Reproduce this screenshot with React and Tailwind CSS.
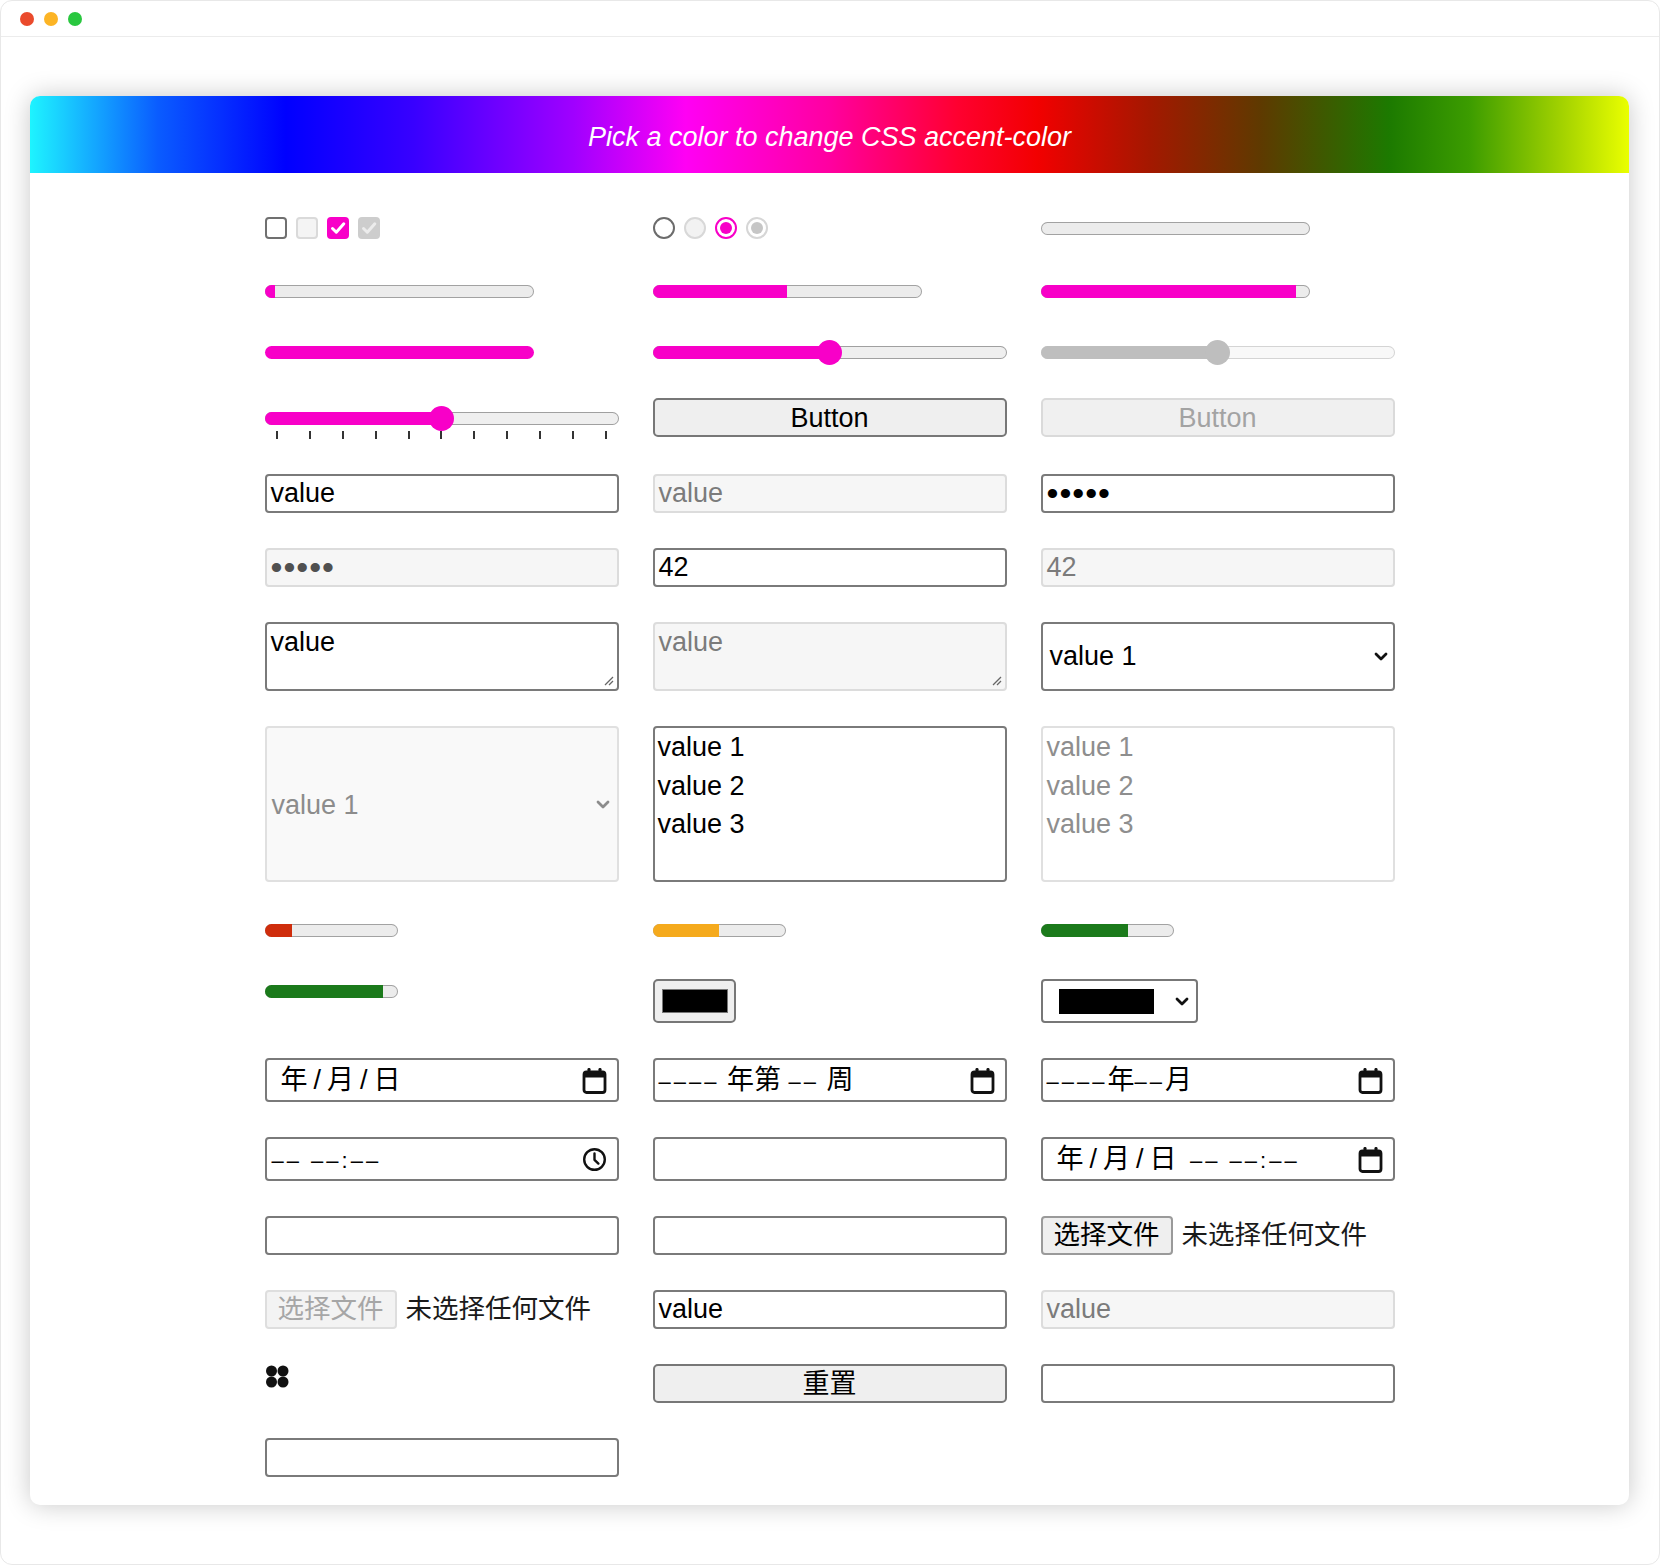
import React from "react";

const FONT = "font-['Liberation_Sans','Noto_Sans_CJK_SC',sans-serif]";

function Check({ kind }) {
  if (kind === "off")
    return <div className="w-[22px] h-[22px] rounded-[4px] border-2 border-[#707070] bg-white" />;
  if (kind === "offDis")
    return <div className="w-[22px] h-[22px] rounded-[4px] border-2 border-[#dadada] bg-[#f4f4f4]" />;
  const on = kind === "on";
  return (
    <div className={`w-[22px] h-[22px] rounded-[4px] flex items-center justify-center ${on ? "bg-[#f800c8]" : "bg-[#cdcdcd]"}`}>
      <svg width="22" height="22" viewBox="0 0 22 22">
        <path d="M5.5 11.5 L9.3 15.2 L16.8 6.8" fill="none" stroke={on ? "#ffffff" : "#ececec"} strokeWidth="3" strokeLinecap="round" strokeLinejoin="round" />
      </svg>
    </div>
  );
}

function Radio({ kind }) {
  if (kind === "off")
    return <div className="w-[22px] h-[22px] rounded-full border-2 border-[#6c6c6c] bg-white" />;
  if (kind === "offDis")
    return <div className="w-[22px] h-[22px] rounded-full border-2 border-[#d8d8d8] bg-[#f2f2f2]" />;
  const on = kind === "on";
  return (
    <div className={`w-[22px] h-[22px] rounded-full border-2 bg-white flex items-center justify-center ${on ? "border-[#f800c8]" : "border-[#d6d6d6]"}`}>
      <div className={`w-[12px] h-[12px] rounded-full ${on ? "bg-[#f800c8]" : "bg-[#c6c6c6]"}`} />
    </div>
  );
}

function Bar({ pct, color, w }) {
  return (
    <div className={`${w} h-[13px] rounded-full overflow-hidden bg-[#ececec] shadow-[inset_0_0_0_1px_#a2a2a2]`}>
      <div className="h-full" style={{ width: `${pct}%`, backgroundColor: color }} />
    </div>
  );
}

function Range({ pct, disabled }) {
  const f = pct / 100;
  return (
    <div className="relative w-full h-[25px] flex items-center">
      <div className={`w-full h-[13px] rounded-full overflow-hidden ${disabled ? "bg-[#f8f8f8] shadow-[inset_0_0_0_1px_#d4d4d4]" : "bg-[#efefef] shadow-[inset_0_0_0_1px_#a0a0a0]"}`}>
        <div className={`h-full ${disabled ? "bg-[#bebebe]" : "bg-[#f800c8]"}`} style={{ width: `calc(12.5px + (100% - 25px) * ${f})` }} />
      </div>
      <div className={`absolute top-0 w-[25px] h-[25px] rounded-full ${disabled ? "bg-[#bebebe]" : "bg-[#f800c8]"}`} style={{ left: `calc((100% - 25px) * ${f})` }} />
    </div>
  );
}

function Field({ children, disabled, className = "" }) {
  return (
    <div className={`w-full h-full rounded-[4px] border-2 flex items-center px-[4px] text-[27px] leading-none ${disabled ? "bg-[#f6f6f6] border-[#dcdcdc] text-[#7b7b7b]" : "bg-white border-[#7a7a7a] text-black"} ${className}`}>
      {children}
    </div>
  );
}

function Btn({ children, disabled }) {
  return (
    <div className={`w-full h-[39px] rounded-[5px] border-2 flex items-center justify-center pt-[2px] text-[27px] leading-none ${disabled ? "bg-[#f0f0f0] border-[#dadada] text-[#a3a3a3]" : "bg-[#efefef] border-[#777777] text-black"}`}>
      {children}
    </div>
  );
}

function Chevron({ color = "#111", w = 14 }) {
  return (
    <svg width={w} height="9" viewBox="0 0 14 9">
      <polyline points="2,2 7,7 12,2" fill="none" stroke={color} strokeWidth="2.8" strokeLinecap="round" strokeLinejoin="round" />
    </svg>
  );
}

function Calendar() {
  return (
    <svg width="25" height="27" viewBox="0 0 25 27">
      <rect x="2" y="5" width="21" height="20.5" rx="2.5" fill="none" stroke="#111" strokeWidth="2.8" />
      <rect x="2" y="5" width="21" height="5.5" fill="#111" />
      <rect x="5.5" y="1" width="3" height="6" rx="1.2" fill="#111" />
      <rect x="16.5" y="1" width="3" height="6" rx="1.2" fill="#111" />
    </svg>
  );
}

function Clock() {
  return (
    <svg width="25" height="25" viewBox="0 0 25 25">
      <circle cx="12.5" cy="12.5" r="10.3" fill="none" stroke="#111" strokeWidth="2.4" />
      <polyline points="12.5,6.5 12.5,12.8 16.4,16.6" fill="none" stroke="#111" strokeWidth="2.4" strokeLinecap="round" strokeLinejoin="round" />
    </svg>
  );
}

function Grip() {
  return (
    <svg className="absolute right-[3px] bottom-[3px]" width="11" height="11" viewBox="0 0 11 11">
      <line x1="10" y1="2" x2="2" y2="10" stroke="#666" strokeWidth="1.2" />
      <line x1="10" y1="6" x2="6" y2="10" stroke="#666" strokeWidth="1.2" />
    </svg>
  );
}

function D({ children }) {
  return <span className="text-[22px] tracking-[3px]">{children}</span>;
}

function FileInput({ disabled }) {
  return (
    <div className="flex items-center h-full gap-[9px]">
      <div className={`w-[132px] h-[39px] rounded-[4px] border-2 flex items-center justify-center text-[26.5px] leading-none ${disabled ? "bg-[#f3f3f3] border-[#dedede] text-[#a6a6a6]" : "bg-[#efefef] border-[#9a9a9a] text-black"}`}>
        选择文件
      </div>
      <span className="text-[26.5px] leading-none text-[#1a1a1a]">未选择任何文件</span>
    </div>
  );
}

export default function App() {
  const ticks = Array.from({ length: 11 }, (_, i) => i);
  const rows = [
    {
      h: "h-[22px]",
      c: [
        <div className="flex gap-[9px]"><Check kind="off" /><Check kind="offDis" /><Check kind="on" /><Check kind="onDis" /></div>,
        <div className="flex gap-[9px]"><Radio kind="off" /><Radio kind="offDis" /><Radio kind="on" /><Radio kind="onDis" /></div>,
        <Bar pct={0} color="#f800c8" w="w-[269px]" />,
      ],
    },
    {
      h: "h-[34px]",
      c: [
        <Bar pct={4} color="#f800c8" w="w-[269px]" />,
        <Bar pct={50} color="#f800c8" w="w-[269px]" />,
        <Bar pct={95} color="#f800c8" w="w-[269px]" />,
      ],
    },
    {
      h: "h-[18px]",
      c: [
        <div className="w-[269px] h-[13px] rounded-full bg-[#f800c8]" />,
        <Range pct={50} />,
        <Range pct={50} disabled />,
      ],
    },
    {
      h: "h-[43px]",
      c: [
        <div className="w-full h-full pt-[10px] flex flex-col">
          <Range pct={50} />
          <div className="flex justify-between px-[11.5px] h-[8px]">
            {ticks.map((t) => (
              <div key={t} className="w-[2px] h-[8px] bg-[#333333]" />
            ))}
          </div>
        </div>,
        <Btn>Button</Btn>,
        <Btn disabled>Button</Btn>,
      ],
    },
    {
      h: "h-[39px]",
      c: [
        <Field>value</Field>,
        <Field disabled>value</Field>,
        <Field><span className="text-[34px] tracking-[1px] leading-none -mt-[2px]">•••••</span></Field>,
      ],
    },
    {
      h: "h-[39px]",
      c: [
        <Field disabled><span className="text-[34px] tracking-[1px] leading-none -mt-[2px] text-[#505050]">•••••</span></Field>,
        <Field>42</Field>,
        <Field disabled>42</Field>,
      ],
    },
    {
      h: "h-[69px]",
      c: [
        <div className="relative w-full h-full rounded-[4px] border-2 border-[#7a7a7a] bg-white px-[4px] pt-[3px] text-[27px] leading-[31px] text-black">
          value
          <Grip />
        </div>,
        <div className="relative w-full h-full rounded-[4px] border-2 border-[#dcdcdc] bg-[#f6f6f6] px-[4px] pt-[3px] text-[27px] leading-[31px] text-[#7b7b7b]">
          value
          <Grip />
        </div>,
        <div className="w-full h-full rounded-[4px] border-2 border-[#7a7a7a] bg-white flex items-center justify-between pl-[7px] pr-[5px] text-[27px] leading-none text-black">
          <span>value 1</span>
          <Chevron />
        </div>,
      ],
    },
    {
      h: "h-[156px]",
      c: [
        <div className="w-full h-full rounded-[4px] border-2 border-[#e0e0e0] bg-[#f9f9f9] flex items-center justify-between pl-[5px] pr-[7px] text-[27px] leading-none text-[#8c8c8c]">
          <span className="mt-[2px]">value 1</span>
          <Chevron color="#8c8c8c" />
        </div>,
        <div className="w-full h-full rounded-[4px] border-2 border-[#7a7a7a] bg-white pl-[3px] text-[27px] leading-[38.5px] text-black">
          <div>value 1</div>
          <div>value 2</div>
          <div>value 3</div>
        </div>,
        <div className="w-full h-full rounded-[4px] border-2 border-[#e0e0e0] bg-white pl-[4px] text-[27px] leading-[38.5px] text-[#8e8e8e]">
          <div>value 1</div>
          <div>value 2</div>
          <div>value 3</div>
        </div>,
      ],
    },
    {
      h: "h-[27px]",
      c: [
        <Bar pct={21} color="#cf2d0c" w="w-[133px]" />,
        <Bar pct={50} color="#f5aa1d" w="w-[133px]" />,
        <Bar pct={66} color="#1b7a1b" w="w-[133px]" />,
      ],
    },
    {
      h: "h-[44px]",
      c: [
        <div className="w-full h-full pt-[6px]"><Bar pct={89} color="#1b7a1b" w="w-[133px]" /></div>,
        <div className="w-[83px] h-[44px] rounded-[5px] border-2 border-[#777777] bg-[#efefef] pl-[7px] pt-[8px]">
          <div className="w-[66px] h-[24px] bg-black border border-[#777777]" />
        </div>,
        <div className="w-[157px] h-[44px] rounded-[4px] border-2 border-[#777777] bg-white flex items-center justify-between pl-[16px] pr-[7px]">
          <div className="w-[95px] h-[25px] bg-black" />
          <Chevron />
        </div>,
      ],
    },
    {
      h: "h-[44px]",
      c: [
        <Field className="pl-[14px] pr-[10px] justify-between text-[26.5px]"><span className="tracking-[6px]">年/月/日</span><Calendar /></Field>,
        <Field className="pr-[10px] justify-between text-[26.5px]"><span><D>––––</D> 年第 <D>––</D> 周</span><Calendar /></Field>,
        <Field className="pr-[10px] justify-between text-[26.5px]"><span><D>––––</D>年<D>––</D>月</span><Calendar /></Field>,
      ],
    },
    {
      h: "h-[44px]",
      c: [
        <Field className="pl-[5px] pr-[10px] justify-between text-[26.5px]"><span><D>–– ––:––</D></span><Clock /></Field>,
        <Field />,
        <Field className="pl-[14px] pr-[10px] justify-between text-[26.5px]"><span><span className="tracking-[6px]">年/月/日</span> <D>–– ––:––</D></span><Calendar /></Field>,
      ],
    },
    {
      h: "h-[39px]",
      c: [<Field />, <Field />, <FileInput />],
    },
    {
      h: "h-[39px]",
      c: [<FileInput disabled />, <Field>value</Field>, <Field disabled>value</Field>],
    },
    {
      h: "h-[39px]",
      c: [
        <div className="h-full flex items-start pt-[1px]">
          <svg width="25" height="23" viewBox="0 0 25 23">
            <ellipse cx="6.5" cy="6" rx="5.5" ry="5.5" fill="#111" />
            <ellipse cx="18" cy="6" rx="5.5" ry="5.5" fill="#111" />
            <ellipse cx="6.5" cy="17" rx="5.5" ry="5.5" fill="#111" />
            <ellipse cx="18" cy="17" rx="5.5" ry="5.5" fill="#111" />
          </svg>
        </div>,
        <Btn>重置</Btn>,
        <Field />,
      ],
    },
    {
      h: "h-[39px]",
      c: [<Field />, <div />, <div />],
    },
  ];

  return (
    <div className={`w-[1660px] h-[1565px] bg-white overflow-hidden ${FONT}`}>
      <div className="w-full h-full rounded-[12px] border border-[#e8e8e8] flex flex-col">
        <div className="h-[36px] border-b border-[#ececec] flex items-center gap-[10px] pl-[19px] shrink-0">
          <div className="w-[14px] h-[14px] rounded-full bg-[#ea4a2c]" />
          <div className="w-[14px] h-[14px] rounded-full bg-[#fcb425]" />
          <div className="w-[14px] h-[14px] rounded-full bg-[#29c73f]" />
        </div>
        <div className="pl-[29px] pt-[59px]">
          <div className="w-[1599px] rounded-[10px] overflow-hidden bg-white shadow-[0_0_26px_rgba(0,0,0,0.22)]">
            <div className="h-[77px] flex items-center justify-center pt-[6px] bg-[linear-gradient(to_right,#1ef4ff_0%,#0a5cff_8%,#0000ff_16%,#3800ff_24%,#a000ff_34%,#ff00f4_41%,#ff00a0_50%,#ff0030_58%,#f20000_63%,#a41800_70%,#5e3a00_77%,#1c7a00_85%,#3c9c00_90%,#a6d400_96%,#eaff00_100%)]">
              <span className="text-[27px] italic text-white leading-none">Pick a color to change CSS accent-color</span>
            </div>
            <div className="flex justify-center pt-[44px] pb-[28px]">
              <div className="grid grid-cols-[354px_354px_354px] gap-x-[34px] gap-y-[35px]">
                {rows.map((r, i) =>
                  r.c.map((cell, j) => (
                    <div key={`${i}-${j}`} className={`${r.h} flex items-center`}>
                      {cell}
                    </div>
                  ))
                )}
              </div>
            </div>
          </div>
        </div>
      </div>
    </div>
  );
}
